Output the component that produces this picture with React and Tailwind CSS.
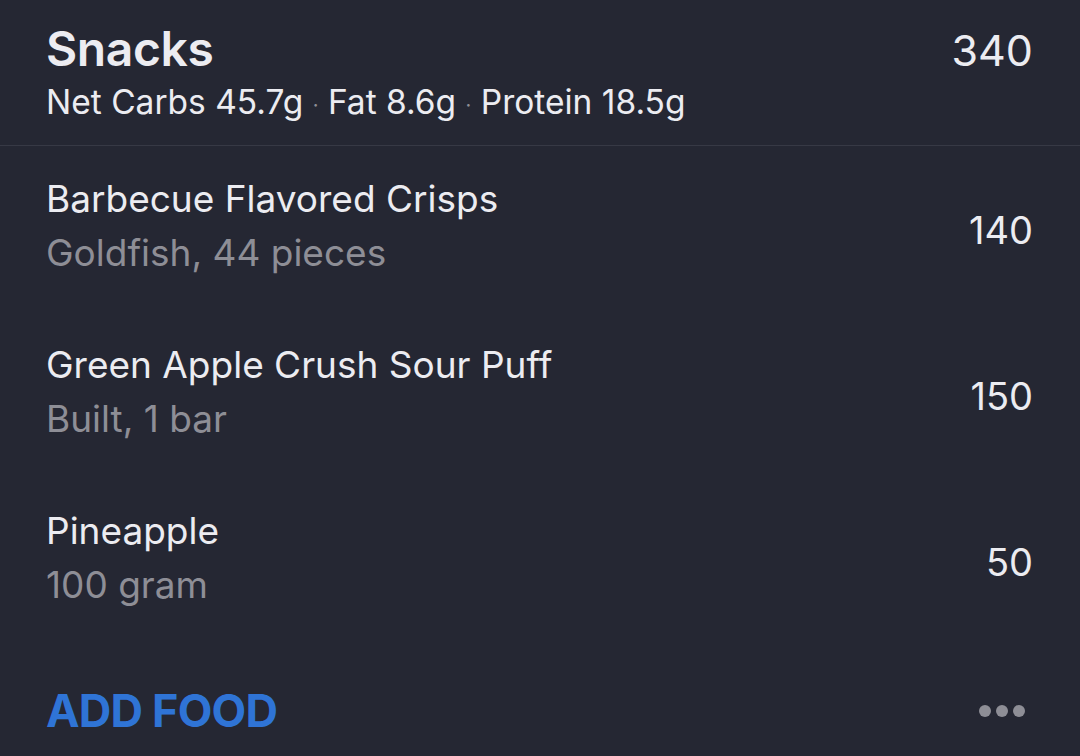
const items = [
  { name: 'Barbecue Flavored Crisps', detail: 'Goldfish, 44 pieces', cal: 140 },
  { name: 'Green Apple Crush Sour Puff', detail: 'Built, 1 bar', cal: 150 },
  { name: 'Pineapple', detail: '100 gram', cal: 50 },
];

export default function App() {
  return (
    <div
      className="w-[1080px] h-[756px] bg-[#252733] text-[#ececf1] overflow-hidden"
      style={{ fontFamily: 'Inter, "Noto Sans", sans-serif' }}
    >
      {/* header */}
      <div className="h-[146px] border-b border-[#373945] pl-[46px] pr-[47px] flex justify-between">
        <div className="pt-[20px]">
          <div className="text-[48px] leading-[58px] font-semibold tracking-[-0.4px]">Snacks</div>
          <div className="text-[33.5px] leading-[42px] mt-[3px]">
            Net Carbs 45.7g <span className="text-[#8e8e96] text-[20px] align-middle">·</span> Fat 8.6g{' '}
            <span className="text-[#8e8e96] text-[20px] align-middle">·</span> Protein 18.5g
          </div>
        </div>
        <div className="pt-[22px] text-[43px] leading-[56px]">340</div>
      </div>

      {/* items */}
      {items.map((item) => (
        <div key={item.name} className="h-[166px] pl-[46px] pr-[47px] flex items-center justify-between">
          <div className="-mt-[6px]">
            <div className="text-[37px] leading-[48px]">{item.name}</div>
            <div className="text-[37px] leading-[48px] mt-[6px] text-[#8e8e96]">{item.detail}</div>
          </div>
          <div className="text-[38px] leading-[48px] mt-[2px]">{item.cal}</div>
        </div>
      ))}

      {/* footer */}
      <div className="pl-[46px] pr-[55px] pt-[38px] flex items-center justify-between">
        <div className="text-[45px] leading-[58px] font-bold text-[#2f74d6] tracking-[-0.8px]">ADD FOOD</div>
        <div className="flex gap-[5px]">
          <span className="w-[12px] h-[12px] rounded-full bg-[#8e8e96]" />
          <span className="w-[12px] h-[12px] rounded-full bg-[#8e8e96]" />
          <span className="w-[12px] h-[12px] rounded-full bg-[#8e8e96]" />
        </div>
      </div>
    </div>
  );
}
